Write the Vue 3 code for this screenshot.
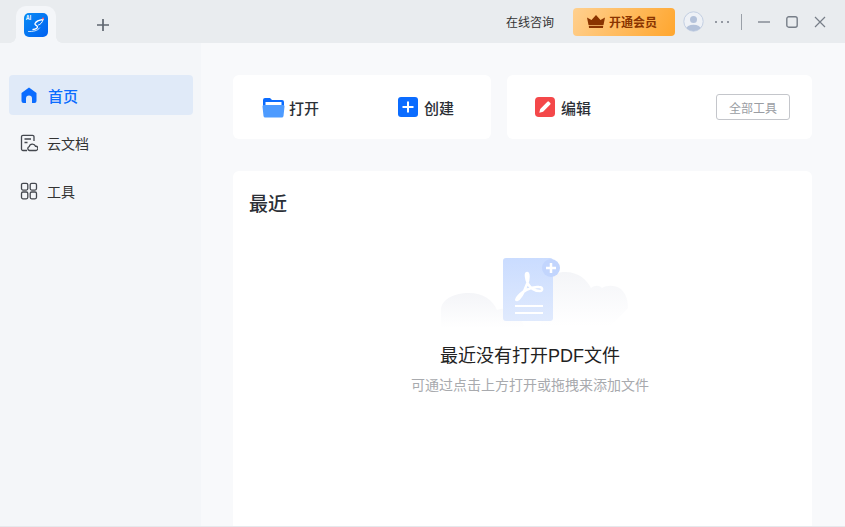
<template>
  <div class="app">
    <!-- 标题栏 -->
    <header class="titlebar">
      <div class="tab">
        <svg class="logo" width="24" height="24" viewBox="0 0 24 24">
          <defs>
            <linearGradient id="logoBg" x1="0" y1="0" x2="1" y2="1">
              <stop offset="0" stop-color="#0a8cf5" />
              <stop offset="1" stop-color="#0060f0" />
            </linearGradient>
          </defs>
          <rect width="24" height="24" rx="5" fill="url(#logoBg)" />
          <text x="2" y="6.500" class="logo-ai">AI</text>
          <g fill="none" stroke="#fff" stroke-linecap="round">
            <path d="M19 6.500C15.500 7 12 8.500 11 10.500c-.8 1.800 2.500 1.800 2.500 3.300 0 1.600-2.500 2.500-4.500 2.700" stroke-width="1.300" />
            <path d="M19 6.500c-.5 3-2.500 5-4.500 5.500" stroke-width="1" />
            <path d="M4.500 18.500c4.500.2 9.500-.8 11-3.500" stroke-width=".8" />
          </g>
          <circle cx="19" cy="5.500" r="1" fill="#ff5a6a" />
        </svg>
      </div>
      <button class="add-tab">
        <svg width="14" height="14" viewBox="0 0 14 14"><path d="M7 1v12M1 7h12" stroke="#5f6670" stroke-width="1.700" /></svg>
      </button>

      <div class="bar-right">
        <span class="consult">在线咨询</span>
        <button class="vip">
          <svg width="18" height="13" viewBox="0 0 18 13"><path d="M0 2.500 4.500 5 9 0l4.500 5L18 2.500 16.500 10h-15ZM1.800 10.800h14.400L16 13H2Z" fill="#8a3400" /></svg>
          开通会员
        </button>
        <svg class="avatar" width="21" height="21" viewBox="0 0 21 21">
          <defs><clipPath id="avClip"><circle cx="10.500" cy="10.500" r="9.700" /></clipPath></defs>
          <circle cx="10.500" cy="10.500" r="9.700" fill="#eef1f6" stroke="#c3cfe2" />
          <circle cx="10.500" cy="8.500" r="3.500" fill="#b4c2da" />
          <ellipse cx="10.500" cy="18.500" rx="7.500" ry="4.800" fill="#b4c2da" clip-path="url(#avClip)" />
        </svg>
        <span class="dots"><i></i><i></i><i></i></span>
        <span class="sep"></span>
        <div class="win-btns">
          <svg width="12" height="12" viewBox="0 0 12 12"><path d="M0 6h12" stroke="#777e88" stroke-width="1.300" /></svg>
          <svg width="12" height="12" viewBox="0 0 12 12"><rect x=".8" y=".8" width="10.400" height="10.400" rx="2" fill="none" stroke="#777e88" stroke-width="1.400" /></svg>
          <svg width="12" height="12" viewBox="0 0 12 12"><path d="M1 1l10 10M11 1L1 11" stroke="#777e88" stroke-width="1.200" /></svg>
        </div>
      </div>
    </header>

    <div class="body">
      <!-- 侧边栏 -->
      <aside class="sidebar">
        <a v-for="item in navItems" :key="item.label" class="nav-item" :class="{ active: item.active }">
          <svg v-if="item.icon === 'home'" width="18" height="18" viewBox="0 0 18 18">
            <path d="M9 1.500 16.500 7v8a2 2 0 0 1-2 2H12v-4.500a3 3 0 0 0-6 0V17H3.500a2 2 0 0 1-2-2V7Z" fill="#0b6cff" />
          </svg>
          <svg v-else-if="item.icon === 'doc'" width="18" height="18" viewBox="0 0 18 18" fill="none" stroke="#44484f" stroke-width="1.300">
            <path d="M7 16.500H3a1.500 1.500 0 0 1-1.500-1.500V2.800A1.500 1.500 0 0 1 3 1.300h9.500A1.500 1.500 0 0 1 14 2.800V7" />
            <path d="M4.500 5h6.500M4.500 8.500h3" />
            <path d="M9.500 16.500a2 2 0 0 1-.3-3.900 3.300 3.300 0 0 1 6.300-.3 2.100 2.100 0 0 1 .5 4.200Z" />
          </svg>
          <svg v-else width="18" height="18" viewBox="0 0 18 18" fill="none" stroke="#44484f" stroke-width="1.300">
            <rect x="1.500" y="1.300" width="6.300" height="6.800" rx="1.500" />
            <rect x="10.200" y="1.300" width="6.300" height="6.800" rx="1.500" />
            <rect x="1.500" y="10" width="6.300" height="6.800" rx="1.500" />
            <rect x="10.200" y="10" width="6.300" height="6.800" rx="1.500" />
          </svg>
          <span>{{ item.label }}</span>
        </a>
      </aside>

      <main class="main">
        <div class="actions">
          <section class="card card-left">
            <div class="action action-open">
              <svg width="23" height="21" viewBox="0 0 23 21">
                <path d="M1 3a2 2 0 0 1 2-2h5l2 2h10a2 2 0 0 1 2 2v5H1Z" fill="#0b6cff" />
                <rect x="3.500" y="5" width="16" height="6" fill="#fff" />
                <path d="M.5 9.500q-.2-1.500 1.300-1.500h19.400q1.500 0 1.300 1.500l-1 9.500q-.2 1.500-1.800 1.500H3.300q-1.600 0-1.800-1.500Z" fill="#4d9bff" />
              </svg>
              <span>打开</span>
            </div>
            <div class="action action-new">
              <svg width="20" height="20" viewBox="0 0 20 20">
                <rect width="20" height="20" rx="3" fill="#0b6cff" />
                <path d="M10 4.500v11M4.500 10h11" stroke="#fff" stroke-width="2" />
              </svg>
              <span>创建</span>
            </div>
          </section>
          <section class="card card-right">
            <div class="action">
              <svg width="20" height="20" viewBox="0 0 21 21">
                <rect width="21" height="21" rx="4" fill="#f4484a" />
                <path d="M4.500 16.500l1-4L13 5a1.200 1.200 0 0 1 1.700 0l1.300 1.300a1.200 1.200 0 0 1 0 1.700l-7.500 7.500Z" fill="#fff" />
              </svg>
              <span>编辑</span>
            </div>
            <button class="all-tools">全部工具</button>
          </section>
        </div>

        <section class="recent">
          <h2>最近</h2>
          <div class="empty">
            <svg class="empty-pic" width="192" height="72" viewBox="0 0 192 72">
              <defs>
                <linearGradient id="cloud" x1="0" y1="0" x2="0" y2="1">
                  <stop offset="0" stop-color="#f4f5f8" />
                  <stop offset="1" stop-color="#fff" />
                </linearGradient>
                <linearGradient id="paper" x1="0" y1="0" x2="0" y2="1">
                  <stop offset="0" stop-color="#cadcff" />
                  <stop offset="1" stop-color="#e0eafd" />
                </linearGradient>
              </defs>
              <path d="M0 70V52C0 42 12 35 28 35c14 0 24 7 28 17 6-2 14-2 22 4l6 14Z" fill="url(#cloud)" />
              <path d="M100 68V26c8-10 18-12 24-12 14 0 22 8 26 16 4-3 8-3 11 0 5-3 13-3 19 1 5 5 7 11 7 19l-17 18Z" fill="url(#cloud)" />
              <rect x="62" y="0" width="50" height="63" rx="3" fill="url(#paper)" />
              <path d="M76 42C79 41 83 34 86 26 88 21 88 15 86 15 84 15 85 21 87 26 90 31 95 33 99 33 102 33 102 29 98 29 90 28 80 34 76 40 75 42 75 42 76 42Z" fill="none" stroke="#fff" stroke-width="2.500" stroke-linejoin="round" />
              <path d="M74 48h28M74 55h28" stroke="#fff" stroke-width="2" />
              <circle cx="110" cy="10" r="9" fill="#c2d5fd" />
              <path d="M110 5v10M105 10h10" stroke="#fff" stroke-width="2.500" />
            </svg>
            <p class="empty-title">最近没有打开PDF文件</p>
            <p class="empty-sub">可通过点击上方打开或拖拽来添加文件</p>
          </div>
        </section>
      </main>
    </div>
  </div>
</template>

<script setup>
const navItems = [
  { label: '首页', icon: 'home', active: true },
  { label: '云文档', icon: 'doc' },
  { label: '工具', icon: 'tools' }
]
</script>

<style>
html, body { margin: 0; height: 100%; overflow: hidden; }
</style>

<style scoped>
.app {
  width: 845px;
  height: 527px;
  display: flex;
  flex-direction: column;
  font-family: "Noto Sans CJK SC", "Noto Sans", sans-serif;
  color: #2b2f36;
  background: #f8f9fb;
  box-sizing: border-box;
  border-bottom: 1px solid #e6e8ec;
}

/* titlebar */
.titlebar {
  height: 43px;
  flex: none;
  background: #e9ecef;
  display: flex;
  align-items: center;
  padding-left: 16px;
}
.tab {
  position: relative;
  width: 40px;
  height: 37px;
  margin-top: 6px;
  background: #f4f6f9;
  border-radius: 10px 10px 0 0;
  display: flex;
  justify-content: center;
  padding-top: 7px;
  box-sizing: border-box;
}
.tab::before,
.tab::after {
  content: "";
  position: absolute;
  bottom: 0;
  width: 6px;
  height: 6px;
}
.tab::before { left: -6px; background: radial-gradient(circle at 0 0, transparent 5.500px, #f4f6f9 6px); }
.tab::after { right: -6px; background: radial-gradient(circle at 100% 0, transparent 5.500px, #f4f6f9 6px); }
.logo-ai { font-size: 5.500px; font-weight: 700; fill: #fff; }
.add-tab {
  margin: 6px 0 0 40px;
  width: 14px;
  height: 14px;
  padding: 0;
  border: 0;
  background: none;
  display: flex;
}
.bar-right {
  margin-left: auto;
  display: flex;
  align-items: center;
}
.consult { font-size: 12px; color: #333; margin-right: 19px; }
.vip {
  width: 102px;
  height: 28px;
  border: 0;
  border-radius: 4px;
  background: linear-gradient(120deg, #ffd08f, #ffa62e);
  color: #8a3400;
  font: 700 12px "Noto Sans CJK SC", sans-serif;
  display: flex;
  align-items: center;
  gap: 4px;
  padding: 0 0 0 14px;
}
.avatar { margin-left: 8px; }
.dots { display: flex; gap: 4px; margin-left: 11px; }
.dots i { width: 2px; height: 2px; background: #777e88; border-radius: 50%; }
.sep { width: 1px; height: 16px; background: #9aa0a8; margin-left: 12px; }
.win-btns {
  display: flex;
  gap: 16px;
  margin-left: 16px;
  margin-right: 19px;
}
.win-btns svg { display: block; }

.body { flex: 1; display: flex; min-height: 0; }

/* sidebar */
.sidebar {
  width: 201px;
  flex: none;
  background: #f4f6f9;
  padding: 32px 8px 0 9px;
  box-sizing: border-box;
  display: flex;
  flex-direction: column;
  gap: 8px;
}
.nav-item {
  height: 40px;
  padding-left: 11px;
  border-radius: 4px;
  display: flex;
  align-items: center;
  gap: 9px;
  font-size: 14px;
  color: #333;
}
.nav-item.active {
  background: #e0eaf8;
  color: #0b6cff;
  font-size: 15px;
  font-weight: 500;
  gap: 10px;
}

/* main */
.main {
  flex: 1;
  padding: 32px 33px 0 32px;
  display: flex;
  flex-direction: column;
  gap: 32px;
  min-width: 0;
}
.actions { display: flex; gap: 16px; height: 64px; flex: none; }
.card {
  background: #fff;
  border-radius: 6px;
  display: flex;
  align-items: center;
  box-sizing: border-box;
}
.card-left { width: 258px; padding-left: 29px; }
.card-right { flex: 1; padding: 0 22px 0 28px; justify-content: space-between; }
.action {
  display: flex;
  align-items: center;
  gap: 6px;
  font-size: 15px;
  font-weight: 500;
  color: #2b2f36;
}
.action-open { gap: 4px; }
.action-new { margin-left: 79px; }
.all-tools {
  width: 74px;
  height: 26px;
  padding: 0;
  border: 1px solid #c4c6cb;
  border-radius: 3px;
  background: #fff;
  color: #9a9da3;
  font: 12px "Noto Sans CJK SC", sans-serif;
}

.recent {
  flex: 1;
  background: #fff;
  border-radius: 6px 6px 0 0;
  padding: 19px 16px 0;
  display: flex;
  flex-direction: column;
}
.recent h2 {
  margin: 0;
  font-size: 19px;
  line-height: 26px;
  font-weight: 500;
  color: #2b2f36;
}
.empty {
  display: flex;
  flex-direction: column;
  align-items: center;
  padding: 42px 0 0 15px;
}
.empty-pic { display: block; margin-left: 14px; }
.empty-title {
  margin: 13px 0 0;
  font: 18px/26px "Liberation Sans", "Noto Sans CJK SC", sans-serif;
  color: #222;
}
.empty-sub {
  margin: 6px 0 0;
  font-size: 14px;
  line-height: 18px;
  color: #a8aaae;
}
</style>
